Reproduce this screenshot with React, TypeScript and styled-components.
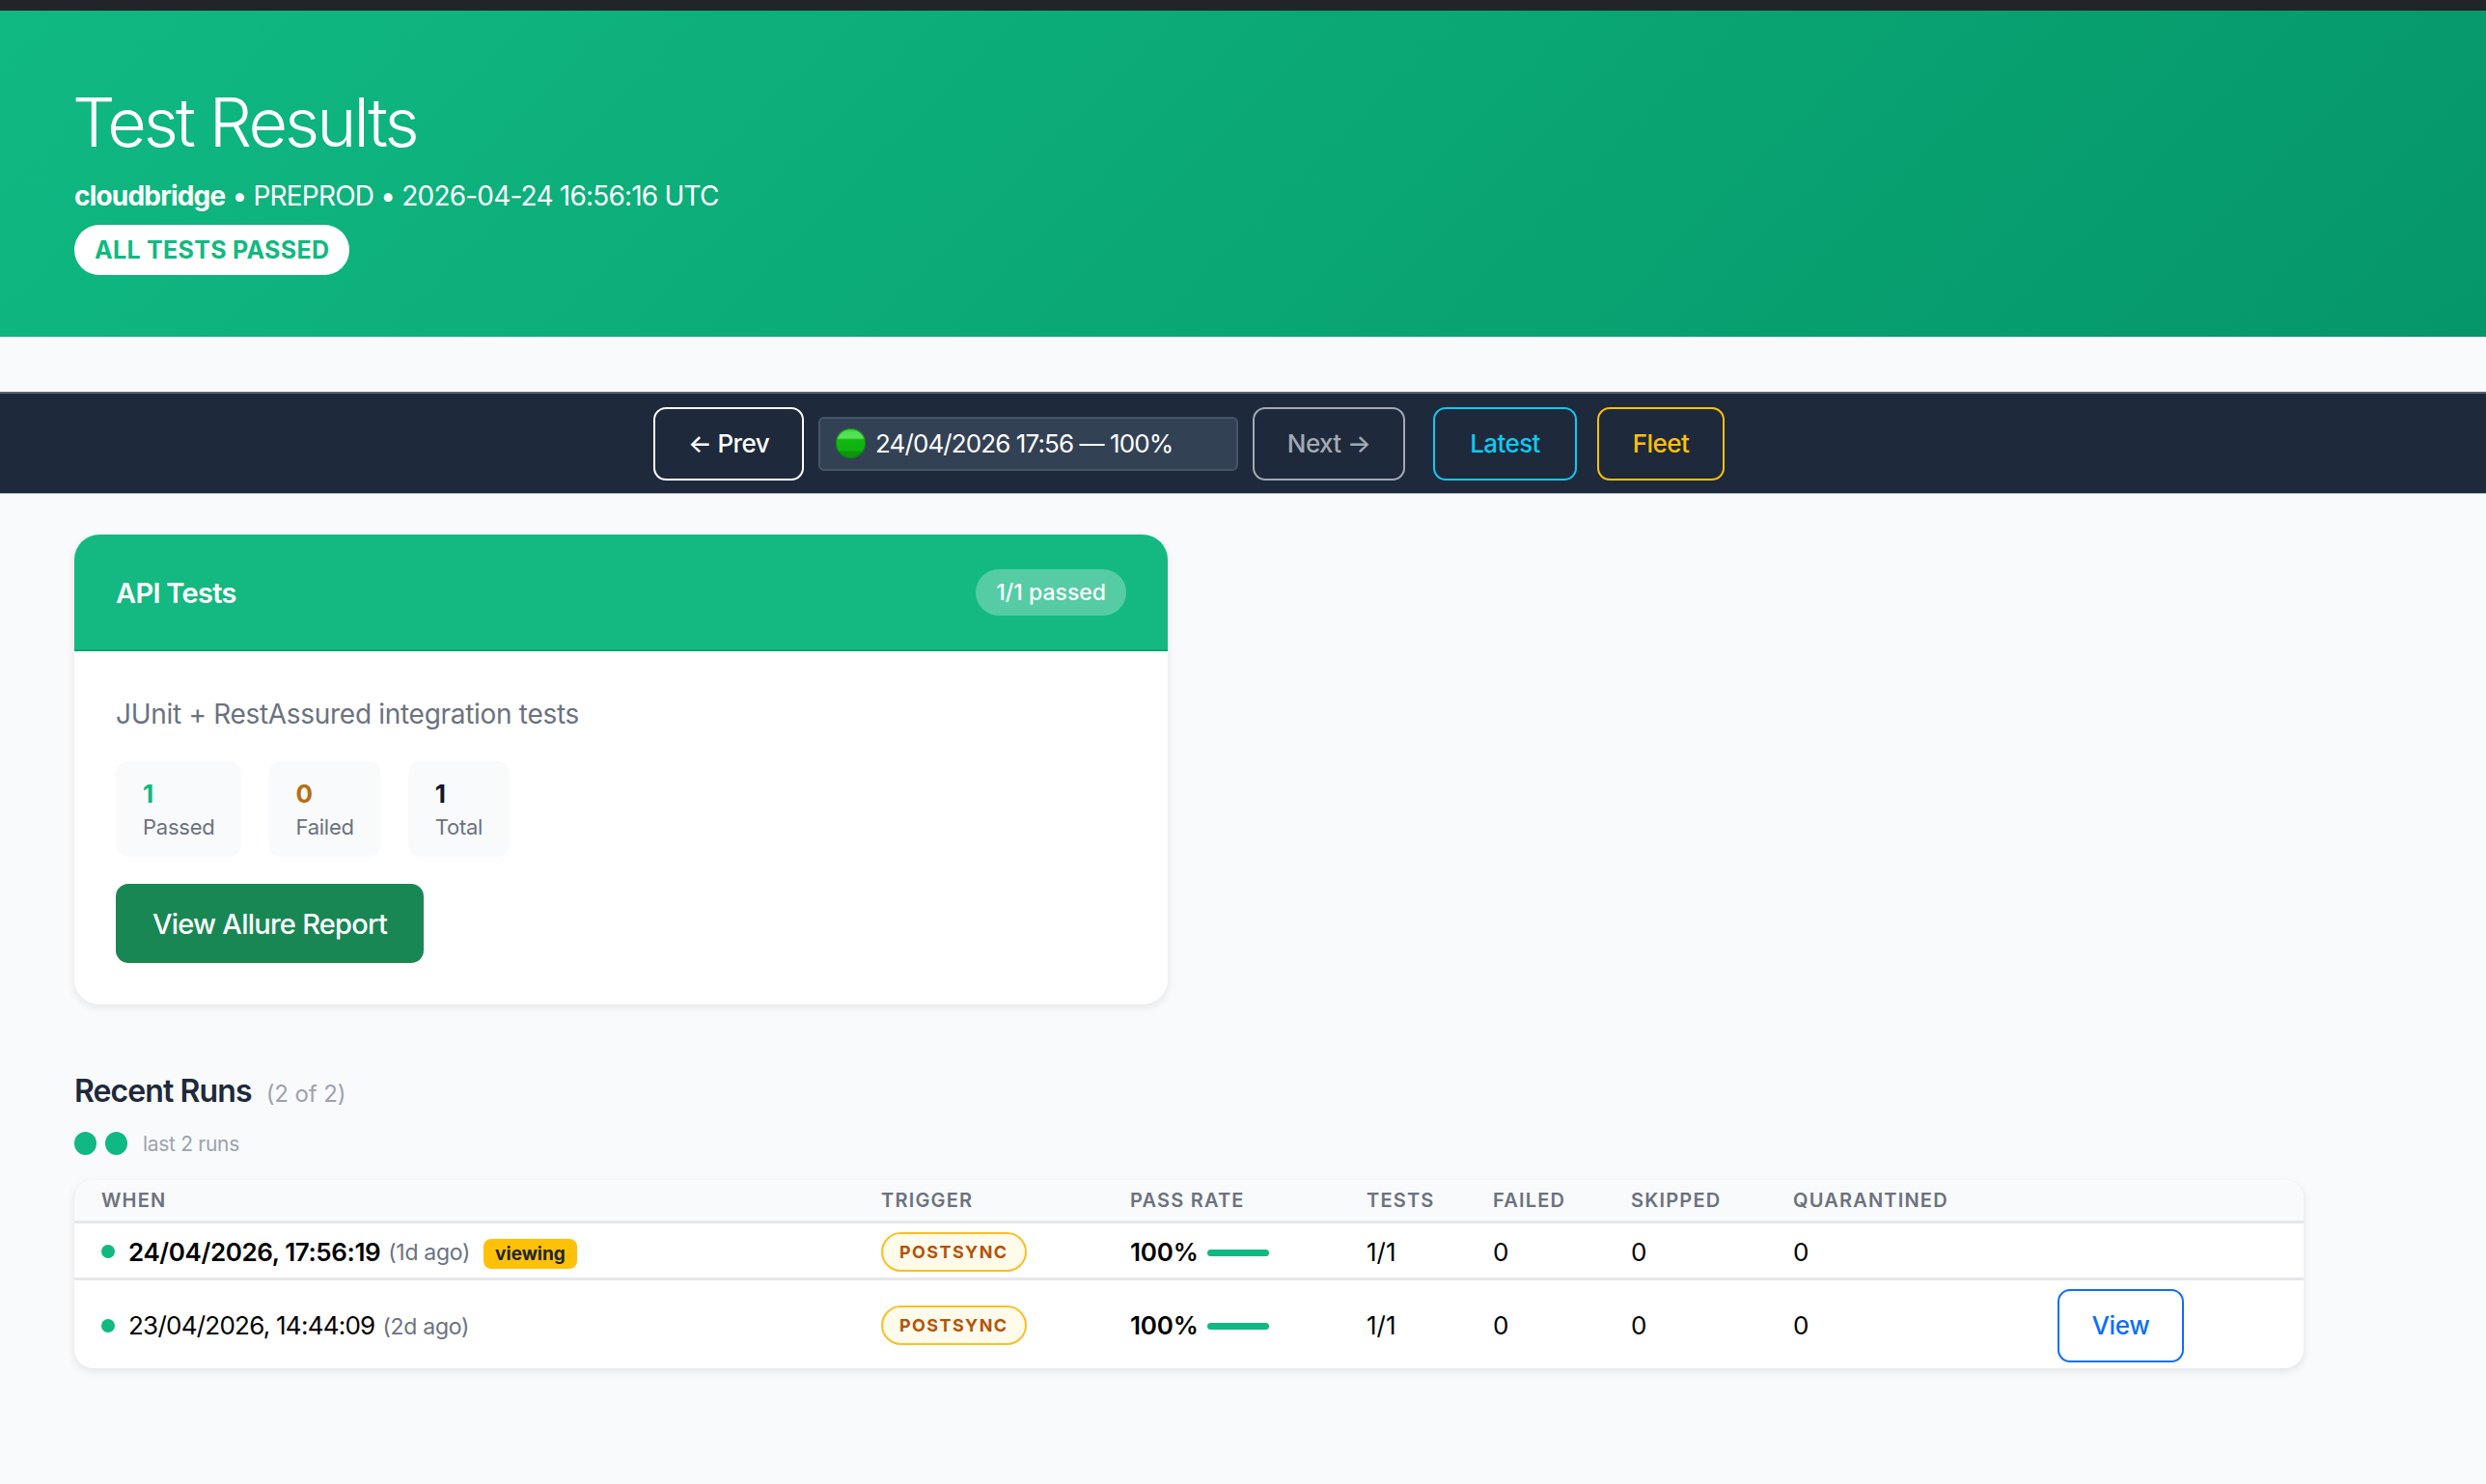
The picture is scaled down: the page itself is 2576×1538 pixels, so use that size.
import React from 'react'
import styled, { createGlobalStyle } from 'styled-components'

type Run = {
  id: number,
  when: string,
  ago: string,
  viewing?: boolean,
}

const runs: Run[] = [
  { id: 1, when: '24/04/2026, 17:56:19', ago: '(1d ago)', viewing: true },
  { id: 2, when: '23/04/2026, 14:44:09', ago: '(2d ago)' },
]

const columns = [
  { label: 'When', width: 808 },
  { label: 'Trigger', width: 258 },
  { label: 'Pass rate', width: 245 },
  { label: 'Tests', width: 131 },
  { label: 'Failed', width: 143 },
  { label: 'Skipped', width: 168 },
  { label: 'Quarantined', width: 274 },
  { label: '', width: 283 },
]

const App: React.FC = () => {
  return (
    <>
      <GlobalStyle />
      <TopStrip />
      <Header>
        <Title>Test Results</Title>
        <Meta><strong>cloudbridge</strong> • PREPROD • 2026-04-24 16:56:16 UTC</Meta>
        <StatusBadge>ALL TESTS PASSED</StatusBadge>
      </Header>

      <NavBar>
        <NavButton $color="#ffffff" $width={156}>← Prev</NavButton>
        <RunSelect><GreenBall />24/04/2026 17:56 — 100%</RunSelect>
        <NavButton $color="#a3a9b3" $width={158}>Next →</NavButton>
        <LatestButton $color="#0dcaf0" $width={149}>Latest</LatestButton>
        <FleetButton $color="#ffc107" $width={132}>Fleet</FleetButton>
      </NavBar>

      <Main>
        <Card>
          <CardHeader>
            <CardTitle>API Tests</CardTitle>
            <CountPill>1/1 passed</CountPill>
          </CardHeader>
          <CardBody>
            <CardDesc>JUnit + RestAssured integration tests</CardDesc>
            <Stats>
              <Stat>
                <StatValue $color="#10b981">1</StatValue>
                <StatLabel>Passed</StatLabel>
              </Stat>
              <Stat>
                <StatValue $color="#b86e14">0</StatValue>
                <StatLabel>Failed</StatLabel>
              </Stat>
              <Stat>
                <StatValue $color="#111827">1</StatValue>
                <StatLabel>Total</StatLabel>
              </Stat>
            </Stats>
            <ReportButton>View Allure Report</ReportButton>
          </CardBody>
        </Card>

        <RunsHeading>
          <RunsTitle>Recent Runs</RunsTitle>
          <RunsCount>(2 of 2)</RunsCount>
        </RunsHeading>
        <Trend>
          <TrendDot />
          <TrendDot />
          <TrendLabel>last 2 runs</TrendLabel>
        </Trend>

        <Table>
          <colgroup>
            {columns.map((c, i) => <Col key={i} $width={c.width} />)}
          </colgroup>
          <thead>
            <tr>
              {columns.map((c, i) => <Th key={i}>{c.label}</Th>)}
            </tr>
          </thead>
          <tbody>
            {runs.map((run) => (
              <Row key={run.id}>
                <Td>
                  <WhenCell>
                    <RowDot />
                    <WhenText $bold={!!run.viewing}>{run.when}</WhenText>
                    <Ago>{run.ago}</Ago>
                    {run.viewing ? <Viewing>viewing</Viewing> : ''}
                  </WhenCell>
                </Td>
                <Td><Trigger>POSTSYNC</Trigger></Td>
                <Td>
                  <RateCell>
                    <Rate>100%</Rate>
                    <RateBar />
                  </RateCell>
                </Td>
                <Td>1/1</Td>
                <Td>0</Td>
                <Td>0</Td>
                <Td>0</Td>
                <Td>{run.viewing ? '' : <ViewButton>View</ViewButton>}</Td>
              </Row>
            ))}
          </tbody>
        </Table>
      </Main>
    </>
  )
}

const GlobalStyle = createGlobalStyle`
  html, body {
    margin: 0;
    padding: 0;
    background: #f9fafb;
  }
  body {
    min-height: 1538px;
    font-family: Inter, "Liberation Sans", sans-serif;
    color: #000000;
  }
  * {
    box-sizing: border-box;
  }
`

const TopStrip = styled.div`
  height: 11px;
  background: #212529;
`

const Header = styled.header`
  height: 338px;
  padding: 73px 77px 0;
  color: #ffffff;
  background: linear-gradient(135deg, #10b981 0%, #059669 100%);
`
const Title = styled.h1`
  margin: 0 0 0 -2px;
  font-size: 70px;
  line-height: 86px;
  font-weight: 300;
  letter-spacing: -2.9px;
`
const Meta = styled.div`
  margin-top: 15px;
  font-size: 28px;
  line-height: 36px;
  font-weight: 400;
  letter-spacing: -0.8px;
  strong {
    font-weight: 700;
  }
`
const StatusBadge = styled.span`
  display: inline-block;
  margin-top: 12px;
  padding: 0 21px;
  height: 52px;
  line-height: 52px;
  border-radius: 26px;
  background: #ffffff;
  color: #10b981;
  font-size: 25px;
  font-weight: 700;
  letter-spacing: 0.3px;
`

const NavBar = styled.nav`
  margin-top: 57px;
  height: 105px;
  padding-right: 112px;
  display: flex;
  align-items: center;
  justify-content: center;
  gap: 15px;
  background: #1e293b;
  border-top: 2px solid #566377;
  box-shadow: 0 1px 0 #b6bfcc;
`
const NavButton = styled.button<{ $color: string, $width: number }>`
  width: ${(p) => p.$width}px;
  height: 76px;
  padding: 0;
  background: transparent;
  border: 2px solid ${(p) => p.$color};
  border-radius: 13px;
  color: ${(p) => p.$color};
  font-family: inherit;
  font-size: 26px;
  font-weight: 500;
  letter-spacing: -0.6px;
`
const LatestButton = styled(NavButton)`
  margin-left: 14px;
`
const FleetButton = styled(NavButton)`
  margin-left: 6px;
`
const RunSelect = styled.div`
  width: 435px;
  height: 56px;
  padding: 0 16px;
  display: flex;
  align-items: center;
  gap: 10px;
  background: #334155;
  border: 2px solid #475569;
  border-radius: 6px;
  color: #ffffff;
  font-size: 26px;
  font-weight: 400;
  letter-spacing: -0.9px;
`
const GreenBall = styled.span`
  width: 31px;
  height: 31px;
  border-radius: 50%;
  background: linear-gradient(180deg, #22c022 0%, #4fe04f 12%, #5be05b 32%, #10b810 38%, #10b010 74%, #0b960b 78%, #0b960b 100%);
  box-shadow: inset 0 0 0 1px rgba(8, 120, 8, 0.7);
`

const Main = styled.main`
  padding: 43px 77px 0;
`

const Card = styled.section`
  width: 1133px;
  height: 487px;
  border-radius: 26px;
  overflow: hidden;
  background: #ffffff;
  box-shadow: 0 3px 10px rgba(15, 23, 42, 0.09);
`
const CardHeader = styled.div`
  height: 121px;
  padding: 0 43px;
  display: flex;
  align-items: center;
  justify-content: space-between;
  background: #14b981;
  border-bottom: 2px solid #0ea572;
  color: #ffffff;
`
const CardTitle = styled.h2`
  margin: 2px 0 0;
  font-size: 29px;
  font-weight: 600;
  letter-spacing: -0.7px;
`
const CountPill = styled.span`
  height: 48px;
  line-height: 48px;
  padding: 0 21px;
  border-radius: 24px;
  background: rgba(255, 255, 255, 0.28);
  font-size: 23px;
  font-weight: 500;
`
const CardBody = styled.div`
  padding: 45px 43px 0;
`
const CardDesc = styled.p`
  margin: 0;
  font-size: 28px;
  line-height: 40px;
  letter-spacing: -0.3px;
  color: #6b7280;
`
const Stats = styled.div`
  margin-top: 29px;
  display: flex;
  gap: 28px;
`
const Stat = styled.div`
  height: 99px;
  padding: 17px 28px 0;
  border-radius: 13px;
  background: #f9fafb;
`
const StatValue = styled.div<{ $color: string }>`
  font-size: 26px;
  line-height: 34px;
  font-weight: 700;
  color: ${(p) => p.$color};
`
const StatLabel = styled.div`
  margin-top: 2px;
  font-size: 22px;
  line-height: 30px;
  letter-spacing: -0.25px;
  color: #6b7280;
`
const ReportButton = styled.button`
  display: block;
  margin-top: 28px;
  width: 319px;
  height: 82px;
  border: none;
  border-radius: 13px;
  background: #198754;
  color: #ffffff;
  font-family: inherit;
  font-size: 29px;
  font-weight: 500;
  letter-spacing: -0.75px;
`

const RunsHeading = styled.div`
  margin-top: 67px;
  display: flex;
  align-items: baseline;
  gap: 15px;
`
const RunsTitle = styled.h3`
  margin: 0;
  font-size: 32px;
  line-height: 46px;
  font-weight: 600;
  letter-spacing: -0.9px;
  color: #1e293b;
`
const RunsCount = styled.span`
  font-size: 24px;
  letter-spacing: -0.1px;
  color: #9ca3af;
`
const Trend = styled.div`
  margin-top: 18px;
  height: 26px;
  display: flex;
  align-items: center;
  gap: 9px;
`
const TrendDot = styled.span`
  width: 23px;
  height: 24px;
  border-radius: 50%;
  background: #10b981;
`
const TrendLabel = styled.span`
  margin-left: 7px;
  font-size: 21px;
  letter-spacing: -0.3px;
  color: #9ca3af;
`

const Table = styled.table`
  margin-top: 25px;
  width: 2310px;
  table-layout: fixed;
  border-collapse: separate;
  border-spacing: 0;
  border-radius: 20px;
  overflow: hidden;
  background: #ffffff;
  box-shadow: 0 3px 10px rgba(15, 23, 42, 0.1);
`
const Col = styled.col<{ $width: number }>`
  width: ${(p) => p.$width}px;
`
const Th = styled.th`
  height: 45px;
  padding: 0 28px;
  text-align: left;
  background: #f9fafb;
  border-bottom: 3px solid #e5e7eb;
  color: #6b7280;
  font-size: 20px;
  font-weight: 600;
  letter-spacing: 1.2px;
  text-transform: uppercase;
`
const Row = styled.tr`
  &:first-child td {
    height: 59px;
    padding-top: 2px;
    border-bottom: 3px solid #e5e7eb;
  }
  &:last-child td {
    height: 91px;
    padding-top: 2px;
  }
`
const Td = styled.td`
  padding: 0 28px;
  font-size: 26px;
  font-weight: 400;
  color: #000000;
`
const WhenCell = styled.div`
  display: flex;
  align-items: center;
`
const RowDot = styled.span`
  width: 14px;
  height: 14px;
  margin-right: 14px;
  border-radius: 50%;
  background: #10b981;
`
const WhenText = styled.span<{ $bold: boolean }>`
  font-weight: ${(p) => (p.$bold ? 600 : 400)};
  letter-spacing: ${(p) => (p.$bold ? '-0.4px' : '-0.75px')};
`
const Ago = styled.span`
  margin-left: 8px;
  margin-top: 2px;
  font-size: 23px;
  letter-spacing: -0.3px;
  color: #6b7280;
`
const Viewing = styled.span`
  margin-left: 14px;
  margin-top: 4px;
  height: 31px;
  line-height: 31px;
  padding: 0 12px;
  border-radius: 8px;
  background: #ffc107;
  color: #212529;
  font-size: 19px;
  font-weight: 700;
`
const Trigger = styled.span`
  display: inline-block;
  height: 41px;
  line-height: 37px;
  padding: 0 17px;
  border: 2px solid #fbbf24;
  border-radius: 21px;
  background: #fffbeb;
  color: #b45309;
  font-size: 18px;
  font-weight: 700;
  letter-spacing: 1.4px;
`
const RateCell = styled.div`
  display: flex;
  align-items: center;
  gap: 9px;
`
const Rate = styled.span`
  font-weight: 600;
  letter-spacing: -0.2px;
`
const RateBar = styled.span`
  width: 64px;
  height: 7px;
  margin-top: 2px;
  border-radius: 4px;
  background: #10b981;
`
const ViewButton = styled.button`
  display: block;
  width: 131px;
  height: 76px;
  background: transparent;
  border: 2px solid #0d6efd;
  border-radius: 13px;
  color: #0d6efd;
  font-family: inherit;
  font-size: 26px;
  font-weight: 500;
  letter-spacing: -0.3px;
`

export default App
